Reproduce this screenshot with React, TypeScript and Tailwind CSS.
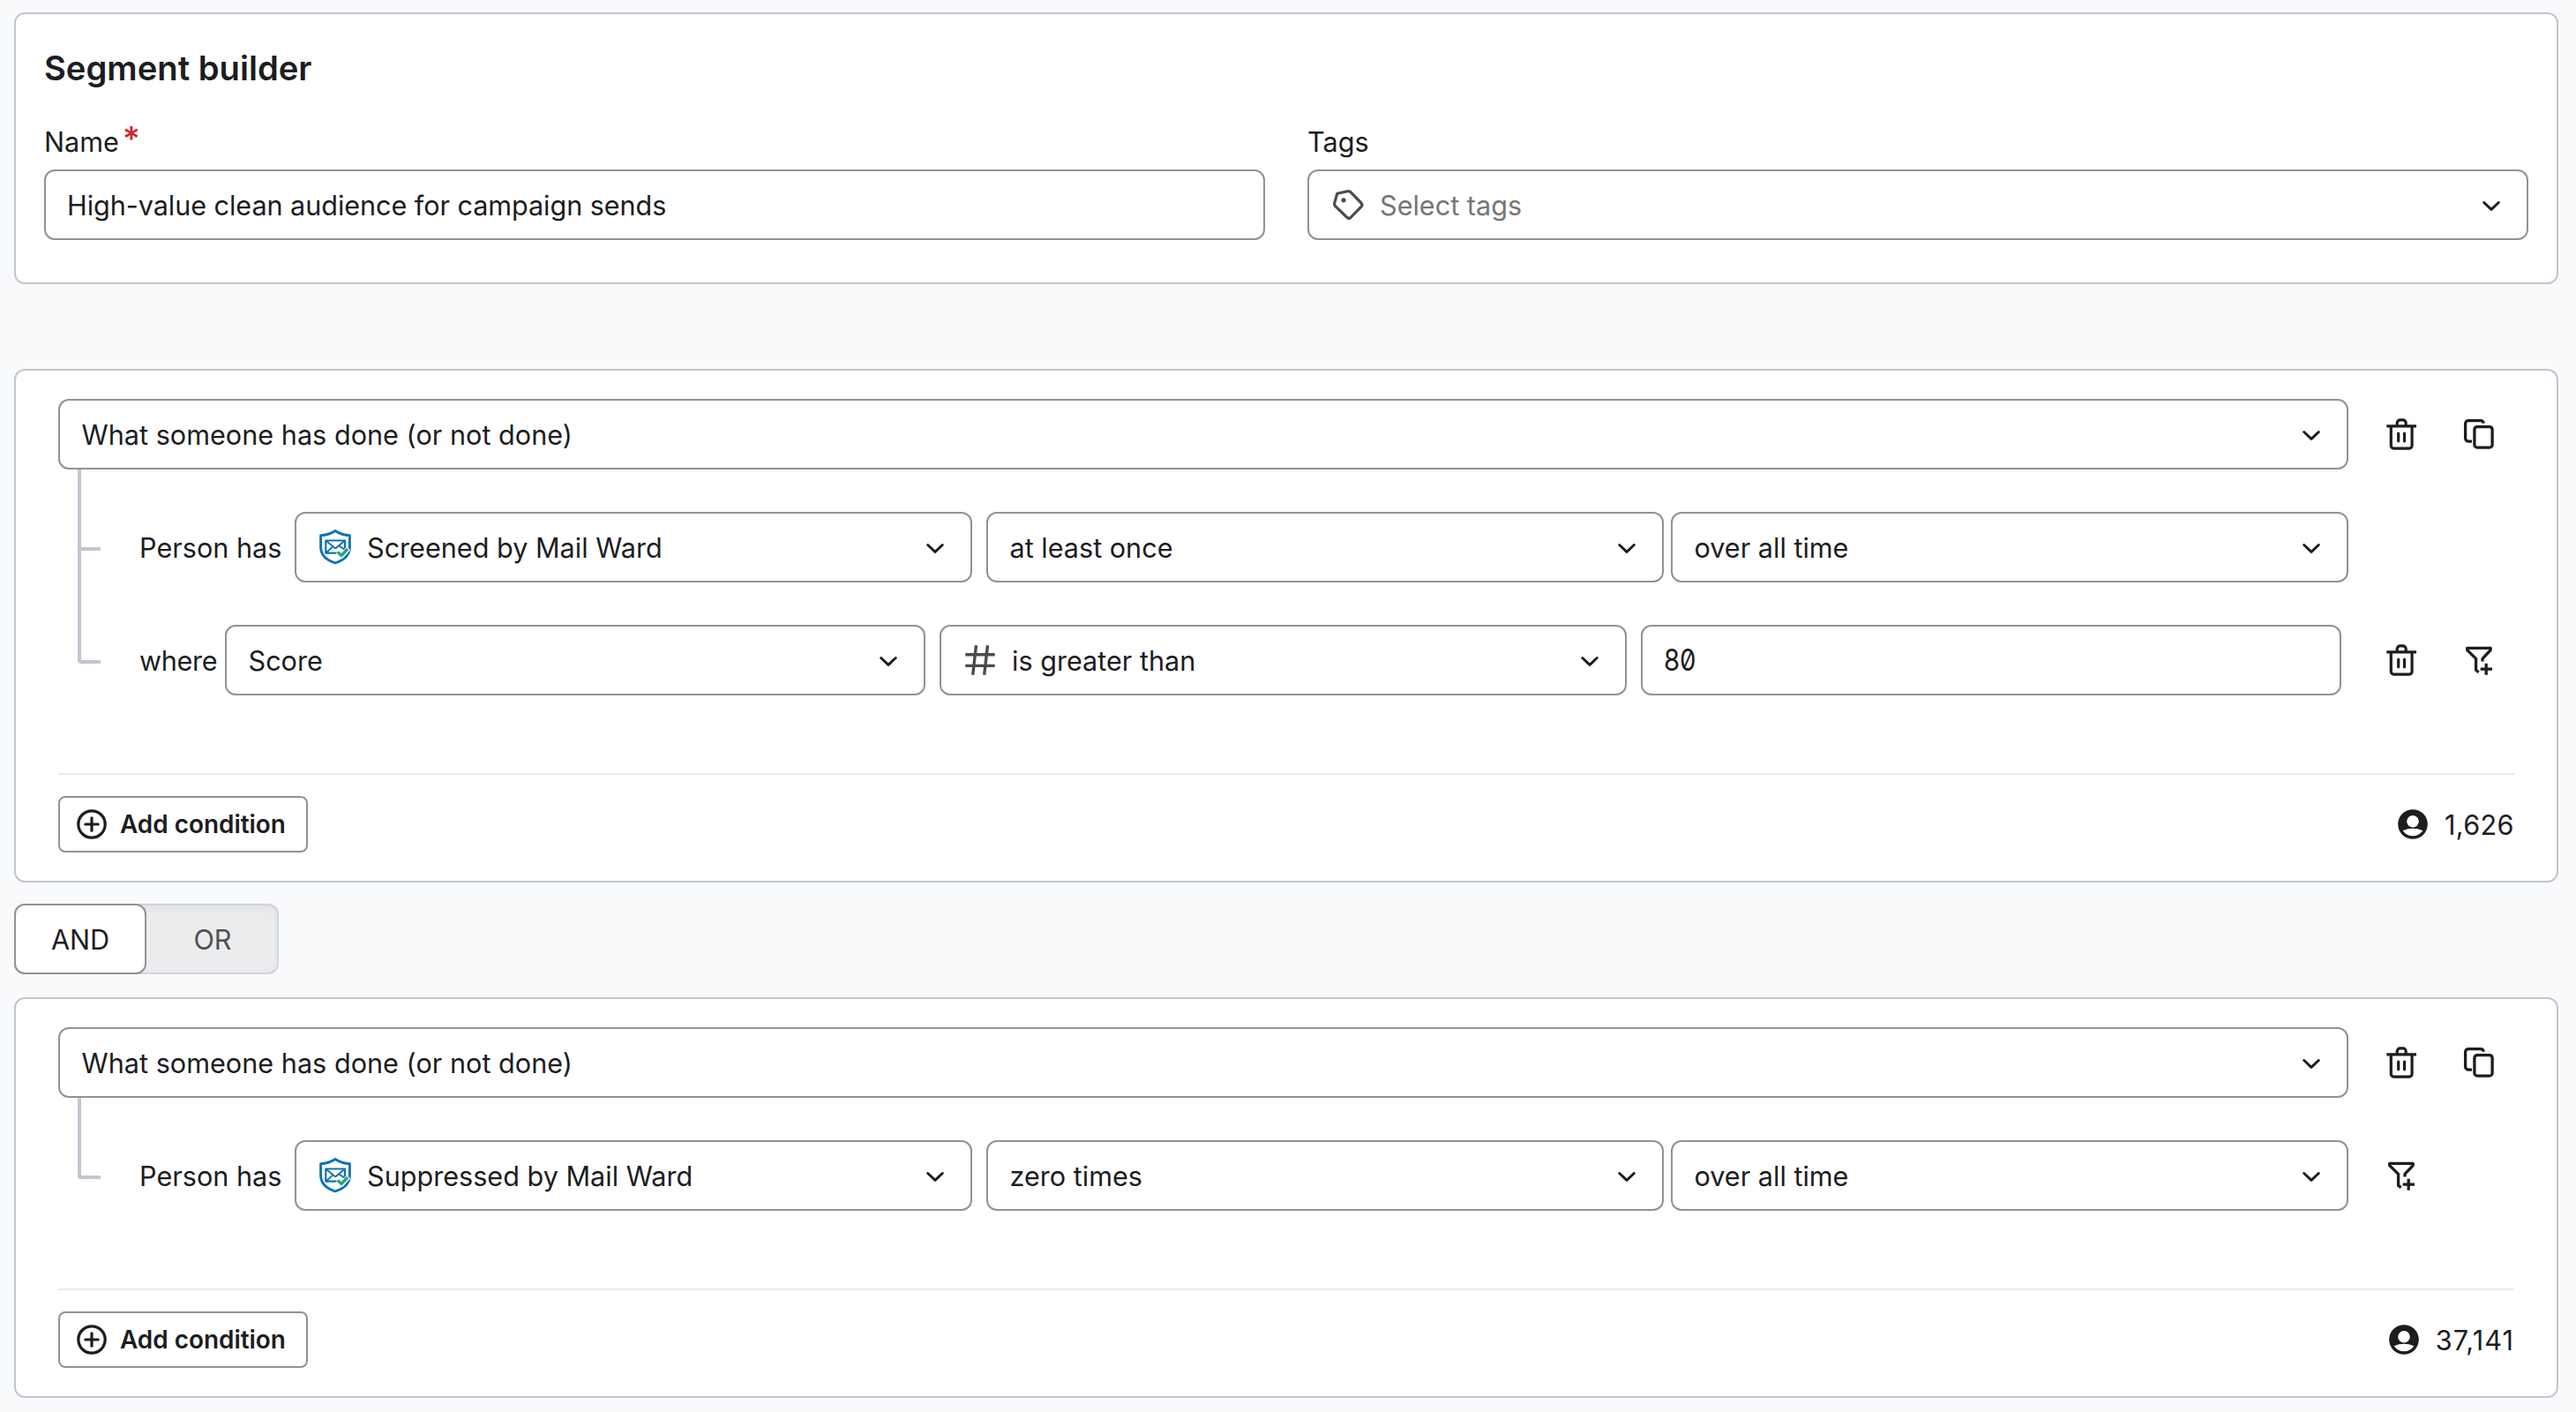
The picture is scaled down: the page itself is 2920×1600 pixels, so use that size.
import React from 'react';
import clsx from 'clsx';

type IconProps = { className?: string };

const ChevronIcon: React.FC = () => (
    <svg viewBox="0 0 24 24" className="w-6 h-6 shrink-0 mr-7" fill="none" stroke="#1c1d1f" strokeWidth="3" strokeLinecap="round" strokeLinejoin="round">
        <path d="M3.7 9.5 12 17.3l8.3-7.8" />
    </svg>
);

const TrashIcon: React.FC = () => (
    <svg viewBox="0 0 40 40" className="w-10 h-10 shrink-0" fill="none" stroke="#1c1d1f" strokeWidth="3.2">
        <path d="M3.3 10.8H37" />
        <path d="M15.2 10.8V7.4a3.5 3.5 0 0 1 3.5-3.5h3a3.5 3.5 0 0 1 3.5 3.5v3.4" />
        <path d="M8.3 10.8v22.3a3 3 0 0 0 3 3h17.8a3 3 0 0 0 3-3V10.8" />
        <path d="M16.7 19.2v8.6M23.5 19.2v8.6" strokeLinecap="round" />
    </svg>
);

const CopyIcon: React.FC = () => (
    <svg viewBox="0 0 40 40" className="w-10 h-10 shrink-0" fill="none" stroke="#1c1d1f" strokeWidth="3.3">
        <rect x="14.9" y="11.6" width="20.2" height="23.5" rx="3.2" />
        <path d="M25.2 7.6a3.4 3.4 0 0 0-3.2-3H8a3.4 3.4 0 0 0-3.4 3.4v16.6a3.6 3.6 0 0 0 3.6 3.6H12" />
    </svg>
);

const FilterPlusIcon: React.FC = () => (
    <svg viewBox="0 0 40 40" className="w-10 h-10 shrink-0" fill="none" stroke="#1c1d1f" strokeWidth="3.3" strokeLinejoin="round">
        <path d="M24 21.4v-3l9.2-9.8V6.3H6.7v2.3l9.9 9.8v12.8l3 2.6" />
        <path d="M28.2 23.7v13M21.7 30.2H35" />
    </svg>
);

const PlusCircleIcon: React.FC = () => (
    <svg viewBox="0 0 40 40" className="w-10 h-10 shrink-0" fill="none" stroke="#1c1d1f" strokeWidth="3.2">
        <circle cx="20" cy="20" r="15.2" />
        <path d="M20 12.8v14.4M12.8 20h14.4" strokeLinecap="round" />
    </svg>
);

const PersonIcon: React.FC = () => (
    <svg viewBox="0 0 40 40" className="w-10 h-10 shrink-0">
        <circle cx="20" cy="20" r="16.8" fill="#1c1d1f" />
        <circle cx="20" cy="16.7" r="6.8" fill="#fff" />
        <path d="M8.6 27.2Q20 22.4 31.4 27.2 27 33.3 20 33.3T8.6 27.2Z" fill="#fff" />
    </svg>
);

const TagIcon: React.FC = () => (
    <svg viewBox="0 0 40 40" className="w-10 h-10 shrink-0" fill="none" stroke="#4a4b4d" strokeWidth="3.2" strokeLinejoin="round">
        <path d="M7.8 7.2 19.5 4.7q2.2-.4 3.7 1.1L35.1 18.2q1.7 2 0 3.9L23 34.5q-2 1.9-4 0L5.7 21.6q-1.4-1.5-1-3.5Z" />
        <circle cx="15" cy="14.8" r="2.6" fill="#4a4b4d" stroke="none" />
    </svg>
);

const HashIcon: React.FC = () => (
    <svg viewBox="0 0 40 40" className="w-10 h-10 shrink-0" fill="none" stroke="#4a4b4d" strokeWidth="3.4">
        <path d="M3.3 13.7h33.4M3.3 26.4h33.4M15.5 3.2l-3.8 33.6M28.5 3.2l-3.8 33.6" />
    </svg>
);

const MailWardIcon: React.FC = () => (
    <svg viewBox="0 0 40 40" className="w-10 h-10 shrink-0" fill="none" stroke="#0f72b5" strokeLinejoin="round">
        <path d="M20 1.5q7.5 5 16.4 5.2V20q0 12.500-16.4 18Q3.6 32.500 3.6 20V6.700Q12.500 6.500 20 1.500Z" strokeWidth="2.9" />
        <path d="M31 21v-8.500H9.300v14.200H22" strokeWidth="2.200" />
        <path d="M9.300 12.500 19 20.600q1.200.8 2.400 0L31 12.500M9.300 26.700l8-7.300M31 22.600l-7.400-4.400" strokeWidth="1.900" />
        <path d="m22.500 25.500 4.600 4.600 8-8.600" stroke="#fff" strokeWidth="5.500" />
        <path d="m22.800 25.400 4.200 4 7.200-7.400" stroke="#22a57c" strokeWidth="3.400" strokeLinejoin="miter" />
    </svg>
);

const Select: React.FC<{ icon?: React.ReactNode; muted?: boolean; children: React.ReactNode } & IconProps> = ({ icon, muted, className, children }) => (
    <div className={clsx('flex items-center h-20 pl-[24.5px] border-2 border-[#929292] rounded-xl bg-white', className)}>
        {icon && <span className="-ml-[0.5px] mr-4">{icon}</span>}
        <span className={clsx('flex-1 pt-0.5 whitespace-nowrap', muted && 'text-[#757678]')}>{children}</span>
        <ChevronIcon />
    </div>
);

const Condition: React.FC<{ count: string; countClass: string; children: React.ReactNode }> = ({ count, countClass, children }) => (
    <section className="border-2 border-[#c1c6cf] rounded-xl bg-white px-12 py-8">
        <div className="flex flex-col gap-12">
            <div className="flex items-center">
                <Select className="w-[2596px] tracking-[0.02px]">What someone has done (or not done)</Select>
                <div className="flex gap-12 ml-10">
                    <TrashIcon />
                    <CopyIcon />
                </div>
            </div>
            {children}
        </div>
        <div className="flex items-center justify-between mt-[88px] pt-6 border-t-2 border-[#ebebec]">
            <button className="flex items-center gap-3 w-[283px] h-16 pl-4 border-2 border-[#929292] rounded-lg text-[27.9px] font-semibold whitespace-nowrap">
                <PlusCircleIcon />
                Add condition
            </button>
            <div className="flex items-center gap-4">
                <PersonIcon />
                <span className={clsx('pt-0.5', countClass)}>{count}</span>
            </div>
        </div>
    </section>
);

const EventRow: React.FC<{ event: string; times: string; last?: boolean; action?: React.ReactNode }> = ({ event, times, last, action }) => (
    <div className="flex items-center h-20">
        <div className={clsx('self-start shrink-0 -mt-12 ml-[22px] mr-11 w-[26px] h-[92px] border-l-4 border-b-4 border-[#c1c6cf]', last && 'rounded-bl')} />
        <span className="w-[176px] shrink-0 pt-0.5">Person has</span>
        <Select className="w-[768px]" icon={<MailWardIcon />}>{event}</Select>
        <Select className="w-[768px] ml-4">{times}</Select>
        <Select className="w-[768px] ml-2">over all time</Select>
        {action && <div className="ml-10">{action}</div>}
    </div>
);

export default function App() {
    return (
        <main className="flex flex-col w-[2920px] h-[1600px] pt-3.5 pl-4 pr-5 bg-[#f9fafc] text-[#1c1d1f] text-[30.6px] leading-[40px] font-['Inter',sans-serif]">
            <section className="border-2 border-[#c1c6cf] rounded-xl bg-white px-8 pt-8 pb-12">
                <h1 className="h-[58px] leading-[58px] text-[38.2px] font-semibold">Segment builder</h1>
                <div className="grid grid-cols-2 gap-12 mt-[31px]">
                    <div>
                        <label className="flex h-12 leading-[48px] mb-[7px]">
                            Name
                            <span className="ml-1 -mt-1 text-[38px] font-medium text-[#d0242c]">*</span>
                        </label>
                        <div className="flex items-center h-20 pl-6 pt-0.5 border-2 border-[#929292] rounded-xl tracking-[-0.06px]">High-value clean audience for campaign sends</div>
                    </div>
                    <div>
                        <label className="flex h-12 leading-[48px] mb-[7px]">Tags</label>
                        <Select icon={<TagIcon />} muted>Select tags</Select>
                    </div>
                </div>
            </section>

            <div className="mt-24">
                <Condition count="1,626" countClass="tracking-[0.4px]">
                    <EventRow event="Screened by Mail Ward" times="at least once" />
                    <div className="flex items-center h-20">
                        <div className="self-start shrink-0 -mt-[84px] ml-[22px] mr-11 w-[26px] h-32 border-l-4 border-b-4 border-[#c1c6cf] rounded-bl" />
                        <span className="w-[97px] shrink-0 pt-0.5 tracking-[-0.3px]">where</span>
                        <Select className="w-[794px]">Score</Select>
                        <Select className="w-[779px] ml-4" icon={<HashIcon />}>is greater than</Select>
                        <div className="flex items-center w-[794px] h-20 ml-4 pl-6 border-2 border-[#929292] rounded-xl">
                            <span className="origin-left scale-x-[0.86] text-[34px] slashed-zero">80</span>
                        </div>
                        <div className="flex gap-12 ml-12">
                            <TrashIcon />
                            <FilterPlusIcon />
                        </div>
                    </div>
                </Condition>
            </div>

            <div className="flex w-[300px] h-20 mt-6 mb-[26px] rounded-xl bg-[#ebecee] inset-shadow-[0_0_0_2px_#d1d4da,0_4px_12px_#0000000f]">
                <button className="w-[150px] h-20 pt-0.5 border-2 border-[#929292] rounded-xl bg-white">AND</button>
                <button className="w-[150px] h-20 pt-0.5 text-[#505154]">OR</button>
            </div>

            <Condition count="37,141" countClass="tracking-[1.1px]">
                <EventRow event="Suppressed by Mail Ward" times="zero times" last action={<FilterPlusIcon />} />
            </Condition>
        </main>
    );
}
